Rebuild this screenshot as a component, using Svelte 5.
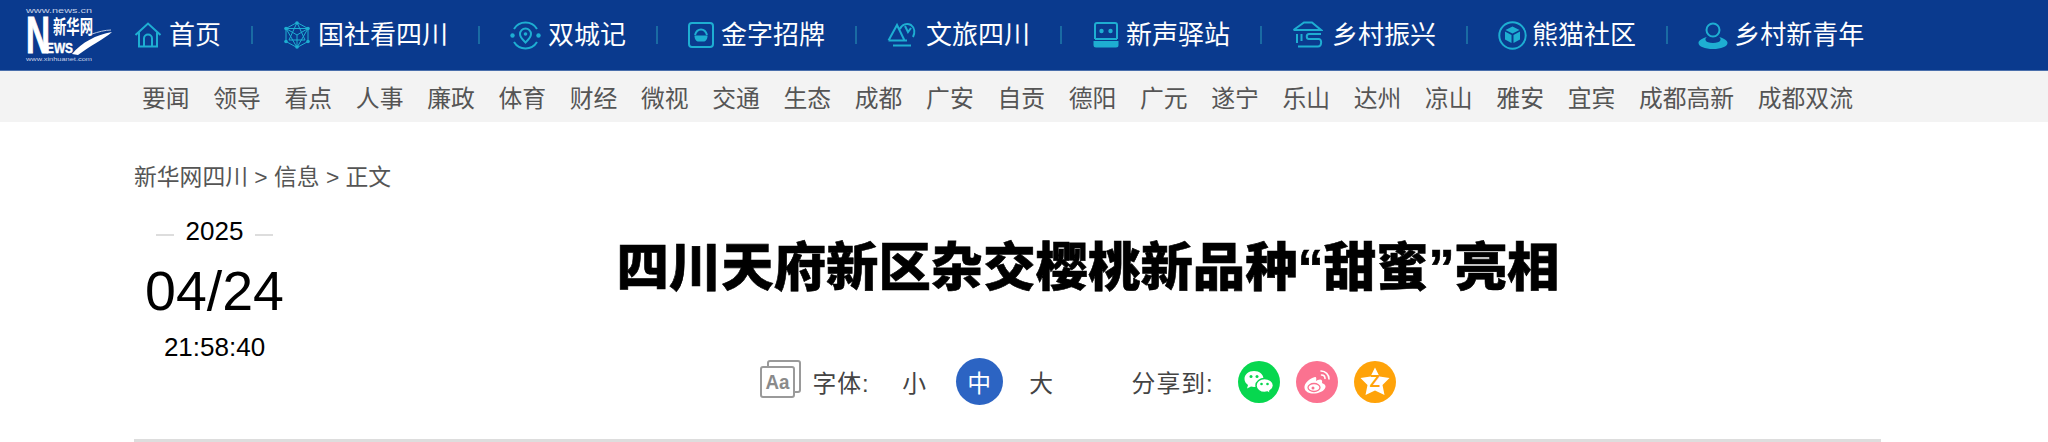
<script lang="ts">
	const channels = [
		'要闻', '领导', '看点', '人事', '廉政', '体育', '财经', '微视', '交通', '生态', '成都',
		'广安', '自贡', '德阳', '广元', '遂宁', '乐山', '达州', '凉山', '雅安', '宜宾', '成都高新', '成都双流'
	];
</script>

<header class="top">
	<a class="logo" href="#top" aria-label="新华网">
		<svg width="90" height="56" viewBox="0 0 90 56">
			<text x="0" y="6.5" class="lg-url" textLength="66" lengthAdjust="spacingAndGlyphs">www.news.cn</text>
			<text x="0" y="47" class="lg-n" textLength="24" lengthAdjust="spacingAndGlyphs">N</text>
			<text transform="translate(27 28) scale(1 1.45)" class="lg-cn" textLength="40" lengthAdjust="spacingAndGlyphs">新华网</text>
			<text x="20" y="47" class="lg-ews" textLength="27" lengthAdjust="spacingAndGlyphs">EWS</text>
			<path d="M46 48C56 36 70 29 86 26 78 33 64 40 52 49Z" fill="#fff" />
			<path d="M66 28C72 26 79 24 85 24" stroke="#b9c8e2" stroke-width="1" fill="none" />
			<text x="0" y="55" class="lg-sub" textLength="66" lengthAdjust="spacingAndGlyphs">www.xinhuanet.com</text>
		</svg>
	</a>
	<nav class="main-nav">
		<a class="item" href="#top">
			<svg class="ic" width="28" height="26" viewBox="0 0 28 26">
				<path d="M1.500 13 14 1.500 26.500 13M5 10.500V24.500H23V10.500M10 24.500V16.500A4 4 0 0 1 18 16.500V24.500" />
			</svg>
			<span>首页</span>
		</a>
		<a class="item" href="#top">
			<svg class="ic thin" width="28" height="28" viewBox="0 0 28 28">
				<path d="M14 1.500 25 7.500V20.500L14 26.500 3 20.500V7.500ZM14 1.500 22 19H6ZM3 7.500H25L14 26.500ZM14 14 3 7.500M14 14 25 7.500M14 14V26.500" />
				<circle class="f" cx="14" cy="2" r="1.800" /><circle class="f" cx="25" cy="7.500" r="1.800" /><circle class="f" cx="25" cy="20.500" r="1.800" />
				<circle class="f" cx="14" cy="26" r="1.800" /><circle class="f" cx="3" cy="20.500" r="1.800" /><circle class="f" cx="3" cy="7.500" r="1.800" />
			</svg>
			<span>国社看四川</span>
		</a>
		<a class="item" href="#top">
			<svg class="ic" width="31" height="29" viewBox="0 0 31 29">
				<path d="M4 8A13.500 13.500 0 0 1 27 8M27 21A13.500 13.500 0 0 1 4 21" />
				<path d="M15.500 7.500A5.500 5.500 0 0 1 21 13C21 16.500 17 20 15.500 21.500 14 20 10 16.500 10 13A5.500 5.500 0 0 1 15.500 7.500Z" />
				<circle class="f" cx="15.500" cy="13" r="1.800" /><circle class="f" cx="2.500" cy="14.500" r="2.200" /><circle class="f" cx="28.500" cy="14.500" r="2.200" />
			</svg>
			<span>双城记</span>
		</a>
		<a class="item" href="#top">
			<svg class="ic" width="26" height="26" viewBox="0 0 26 26">
				<rect x="1" y="1" width="24" height="24" rx="3" />
				<path d="M7 13C8 9.500 10.500 7.500 13 7.500S18 9.500 19 13" />
				<path class="f" d="M6.500 13.500H19.500C19.500 17.500 17.500 19.500 15.500 19.500H10.500C8.500 19.500 6.500 17.500 6.500 13.500Z" />
			</svg>
			<span>金字招牌</span>
		</a>
		<a class="item" href="#top">
			<svg class="ic" width="30" height="26" viewBox="0 0 30 26">
				<path d="M1.500 18.500 10 3 17.500 18.500M1.500 18.500H20M13 7C15 2 20 1 24 3 28 6 28 11 26 15M18 4 21 10 24 6" />
				<path d="M6 23.500H24" />
			</svg>
			<span>文旅四川</span>
		</a>
		<a class="item" href="#top">
			<svg class="ic" width="28" height="26" viewBox="0 0 28 26">
				<path d="M3 17V3A2 2 0 0 1 5 1H23A2 2 0 0 1 25 3V17M3 17H25" />
				<circle class="f" cx="9.500" cy="9" r="2.200" /><circle class="f" cx="18.500" cy="9" r="2.200" />
				<path class="f" d="M1.500 19H26.500V23A2.500 2.500 0 0 1 24 25.500H4A2.500 2.500 0 0 1 1.500 23Z" />
			</svg>
			<span>新声驿站</span>
		</a>
		<a class="item" href="#top">
			<svg class="ic" width="31" height="28" viewBox="0 0 31 28">
				<path d="M1.500 9 12 1.500H20L29 9H1.500M5 13V22M9.500 13V20M29 13H17C14 13 14 18 17 18H27C30 18 30 25.500 26 25.500H6" />
			</svg>
			<span>乡村振兴</span>
		</a>
		<a class="item" href="#top">
			<svg class="ic" width="29" height="29" viewBox="0 0 29 29">
				<circle cx="14.500" cy="14.500" r="13.200" />
				<path class="f" d="M14.500 5.500 21.500 9 14.500 12.500 7.500 9ZM7 10.500 13.500 14V22L7 18.500ZM22 10.500 15.500 14V22L22 18.500Z" />
			</svg>
			<span>熊猫社区</span>
		</a>
		<a class="item" href="#top">
			<svg class="ic" width="30" height="27" viewBox="0 0 30 27">
				<circle cx="15" cy="8" r="6.500" />
				<path class="f" d="M9 15C3.500 16.500 .5 18.500 .5 21 .5 24.500 7 27 15 27S29.500 24.500 29.500 21C29.500 18.500 26.500 16.500 21 15 24 17 23 21 15 21S6 17 9 15Z" />
			</svg>
			<span>乡村新青年</span>
		</a>
	</nav>
</header>

<div class="channels">
	{#each channels as name}
		<a href="#top">{name}</a>
	{/each}
</div>

<main class="page">
	<div class="crumbs">新华网四川 &gt; 信息 &gt; 正文</div>

	<div class="article-head">
		<div class="when">
			<div class="year">2025</div>
			<div class="day">04/24</div>
			<div class="time">21:58:40</div>
		</div>

		<div class="head-main">
			<h1>四川天府新区杂交樱桃新品种“甜蜜”亮相</h1>

			<div class="tools">
				<svg class="aa" width="41" height="38" viewBox="0 0 41 38">
					<path d="M8 6V3A2 2 0 0 1 10 1H38A2 2 0 0 1 40 3V30A2 2 0 0 1 38 32H35" />
					<rect x="1" y="7" width="33" height="30" rx="2" />
					<text x="5.500" y="29" textLength="24" lengthAdjust="spacingAndGlyphs">Aa</text>
				</svg>
				<span class="lbl">字体:</span>
				<div class="sizes">
					<span>小</span>
					<span class="on">中</span>
					<span>大</span>
				</div>
				<span class="lbl share">分享到:</span>
				<div class="shares">
					<svg width="42" height="42" viewBox="0 0 42 42">
						<circle cx="21" cy="21" r="21" fill="#07d74f" />
						<path d="M16 10C10.500 10 6.500 13.500 6.500 18 6.500 20.500 8 22.500 10 24L9 27.500 13 25.500C14 25.800 15 26 16 26 21.500 26 25.500 22.500 25.500 18S21.500 10 16 10Z" fill="#fff" />
						<path d="M26.500 17.500C22 17.500 18 20.500 18 24.500S22 31.500 26.500 31.500C27.500 31.500 28.500 31.300 29.500 31L32.500 33 31.800 30C34 28.500 35.500 26.700 35.500 24.500 35.500 20.500 31 17.500 26.500 17.500Z" fill="#fff" stroke="#07d74f" stroke-width="1.500" />
						<circle cx="13" cy="15.500" r="1.500" fill="#07d74f" /><circle cx="19" cy="15.500" r="1.500" fill="#07d74f" />
						<circle cx="23.500" cy="23" r="1.300" fill="#07d74f" /><circle cx="29.500" cy="23" r="1.300" fill="#07d74f" />
					</svg>
					<svg width="42" height="42" viewBox="0 0 42 42">
						<circle cx="21" cy="21" r="21" fill="#fb7290" />
						<path d="M19 16C13 17.500 8 22.500 8.500 27 9 31 14 33 19 32.500 25 32 30 28.500 29.500 25 29 23 27 22.500 26 22 26.500 20 26 18.500 24 18.500 22.500 18.500 21 19.500 20 20 20.500 18 20.500 15.700 19 16Z" fill="#fff" />
						<ellipse cx="18" cy="26.500" rx="6" ry="4" fill="none" stroke="#fb7290" stroke-width="1.300" />
						<circle cx="17" cy="27" r="1.500" fill="#fb7290" />
						<path d="M25 10C29.500 10 33 13.500 33 18M25.500 14C27.500 14 29 15.500 29 17.500" fill="none" stroke="#fff" stroke-width="1.600" stroke-linecap="round" />
					</svg>
					<svg width="42" height="42" viewBox="0 0 42 42">
						<circle cx="21" cy="21" r="21" fill="#ffa309" />
						<path d="M21 6.500 25.500 15.500 35.500 17 28.500 24 30.500 34 21 29.500 11.500 34 13.500 24 6.500 17 16.500 15.500Z" fill="#fff" />
						<text x="21" y="26" class="qz" text-anchor="middle">Z</text>
					</svg>
				</div>
			</div>
		</div>
	</div>

	<div class="rule"></div>
</main>

<style>
	:global(body) {
		margin: 0;
		background: #fff;
		overflow: hidden;
		font-family: 'Liberation Sans', 'Noto Sans CJK SC', sans-serif;
	}

	a { text-decoration: none; color: inherit; }

	.top {
		display: flex;
		align-items: center;
		height: 70px;
		padding-left: 26px;
		background: #0a3a8e;
		border-bottom: 1px solid #4a6fac;
	}

	.logo { display: block; width: 108px; height: 56px; flex: none; margin-top: -3px; }
	.logo svg { display: block; overflow: visible; font-family: 'Liberation Sans', 'Noto Sans CJK SC', sans-serif; }
	.lg-url { font-size: 8px; fill: #c4d0e6; }
	.lg-sub { font-size: 6px; fill: #c4d0e6; }
	.lg-n { font-size: 51px; font-weight: 700; fill: #fff; stroke: #fff; stroke-width: 1px; }
	.lg-cn { font-size: 13px; font-weight: 700; fill: #fff; }
	.lg-ews { font-size: 15px; font-weight: 700; fill: #fff; stroke: #fff; stroke-width: .4px; }

	.main-nav { display: flex; align-items: center; }

	.item {
		display: flex;
		align-items: center;
		color: #fff;
		font-size: 26px;
		line-height: 32px;
		white-space: nowrap;
	}

	.item + .item::before {
		content: '';
		width: 2px;
		height: 18px;
		margin: 0 30px;
		background: #1a6ba3;
	}

	.ic {
		flex: none;
		margin-right: 7px;
		fill: none;
		stroke: #1eaed2;
		stroke-width: 2;
	}
	.ic.thin { stroke-width: 1; }
	.ic .f { fill: #1eaed2; stroke: none; }
	.item:nth-child(5) .ic, .item:nth-child(7) .ic { margin-right: 9px; }
	.item:nth-child(6) .ic, .item:nth-child(9) .ic { margin-right: 6px; }
	.item:nth-child(8) .ic { margin-right: 5px; }

	.channels {
		display: flex;
		align-items: center;
		gap: 23.7px;
		height: 51px;
		padding-left: 142px;
		background: #f3f3f3;
		font-size: 23.8px;
		color: #555;
		white-space: nowrap;
	}

	.page { margin: 0 167px 0 134px; }

	.crumbs {
		padding-top: 40px;
		font-size: 22.8px;
		line-height: 30px;
		color: #555;
	}

	.article-head { display: flex; margin-top: 24px; }

	.when {
		flex: none;
		display: flex;
		flex-direction: column;
		align-items: center;
		width: 161px;
		color: #000;
	}

	.year {
		display: flex;
		align-items: center;
		gap: 12px;
		font-size: 26px;
		line-height: 30px;
	}
	.year::before, .year::after {
		content: '';
		width: 18px;
		height: 2px;
		margin-top: 8px;
		background: #ddd;
	}

	.day { margin-top: 15px; font-size: 55.5px; line-height: 60px; }
	.time { margin-top: 11px; font-size: 26px; line-height: 30px; }

	.head-main { flex: 1; min-width: 0; }

	h1 {
		margin: 22px 0 0;
		font-size: 52.4px;
		font-weight: 900;
		line-height: 60px;
		text-align: center;
		color: #000;
		white-space: nowrap;
		-webkit-text-stroke: .6px #000;
	}

	.tools {
		display: flex;
		align-items: center;
		justify-content: center;
		height: 47px;
		margin-top: 60px;
		padding-right: 20px;
		font-size: 23.8px;
		color: #444;
	}

	.lbl { letter-spacing: 1px; }

	.aa { flex: none; margin: 0 11px 6px 0; fill: none; stroke: #9a9a9a; stroke-width: 2; }
	.aa text { fill: #8a8a8a; stroke: none; font-size: 20px; font-weight: 700; }

	.sizes { display: flex; align-items: center; margin-left: 21px; }
	.sizes span {
		display: flex;
		align-items: center;
		justify-content: center;
		width: 47px;
		height: 47px;
		margin-right: 18px;
		border-radius: 50%;
	}
	.sizes .on { background: #2c64c3; color: #fff; margin-right: 15px; }

	.share { margin-left: 49px; }

	.shares { display: flex; gap: 16px; margin-left: 24px; }
	.shares svg { display: block; }
	.qz { font-size: 17px; font-weight: 700; fill: #ffa309; }

	.rule { height: 3px; margin-top: 34px; background: #ddd; }
</style>
